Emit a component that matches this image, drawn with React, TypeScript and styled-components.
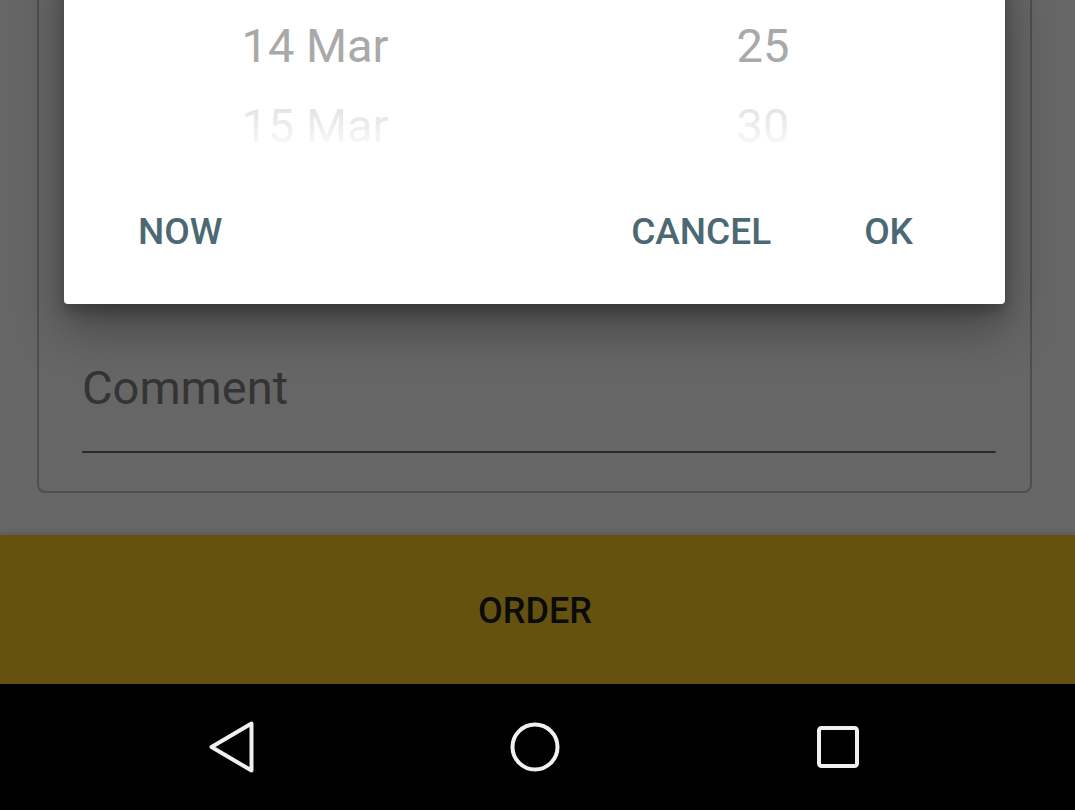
import React from "react";
import styled, { createGlobalStyle } from "styled-components";

const GlobalStyle = createGlobalStyle`
  html, body {
    margin: 0;
    padding: 0;
    background: #000;
  }
  body {
    font-family: Roboto, "Noto Sans", Arial, sans-serif;
  }
  * { box-sizing: border-box; }
`;

const Screen = styled.div`
  width: 1075px;
  height: 810px;
  display: flex;
  flex-direction: column;
  overflow: hidden;
  background: #ffffff;
`;

const AppArea = styled.div`
  position: relative;
  flex: 1;
  display: flex;
  flex-direction: column;
  overflow: hidden;
`;

const Main = styled.main`
  height: 535px;
  display: flex;
  flex-direction: column;
  justify-content: flex-end;
  overflow: hidden;
  background: #ffffff;
`;

const Card = styled.section`
  flex-shrink: 0;
  margin: 0 43px 42px 37px;
  min-height: 700px;
  border: 2px solid #c2c2c2;
  border-radius: 8px;
  padding: 0 34px 38px 43px;
  display: flex;
  flex-direction: column;
  justify-content: flex-end;
`;

const FieldLabel = styled.div`
  font-family: Roboto, sans-serif;
  font-size: 47px;
  line-height: 55px;
  color: #838383;
  margin-bottom: 36px;
`;

const FieldLine = styled.div`
  height: 2px;
  background: #686868;
  border-radius: 1px;
`;

const OrderBar = styled.button`
  flex: 1;
  border: none;
  margin: 0;
  padding: 2px 5px 0 0;
  background: #ffcd26;
  box-shadow: 0 -2px 4px rgba(70, 60, 140, 0.18);
  display: flex;
  align-items: center;
  justify-content: center;
  font-family: Roboto, sans-serif;
  font-weight: 500;
  font-size: 36px;
  color: #1c1c1c;
`;

const Scrim = styled.div`
  position: absolute;
  inset: 0;
  background: rgba(0, 0, 0, 0.6);
`;

const Dialog = styled.div`
  position: absolute;
  left: 64px;
  top: -40px;
  width: 941px;
  background: #ffffff;
  border-radius: 4px;
  box-shadow: 0 24px 48px rgba(0, 0, 0, 0.34), 0 8px 14px rgba(0, 0, 0, 0.22);
  display: flex;
  flex-direction: column;
`;

const Picker = styled.div`
  display: grid;
  grid-template-columns: 448px 448px;
  padding: 46px 0 0 27px;
`;

const Wheel = styled.div`
  display: flex;
  flex-direction: column;
  align-items: center;
`;

const WheelItem = styled.div<{ $fade: number }>`
  height: 80px;
  line-height: 80px;
  font-family: Roboto, sans-serif;
  font-size: 47px;
  color: #a9a9a9;
  white-space: nowrap;
  ${(p) =>
    p.$fade < 1
      ? `-webkit-mask-image: linear-gradient(to bottom, rgba(0,0,0,${p.$fade}) 30%, rgba(0,0,0,${
          p.$fade * 0.35
        }) 70%);
         mask-image: linear-gradient(to bottom, rgba(0,0,0,${p.$fade}) 30%, rgba(0,0,0,${
          p.$fade * 0.35
        }) 70%);`
      : ""}
`;

const Actions = styled.div`
  display: flex;
  align-items: center;
  padding: 30px 92px 36px 74px;
  gap: 93px;
`;

const Spacer = styled.div`
  flex: 1;
`;

const ActionButton = styled.button`
  border: none;
  background: transparent;
  padding: 0;
  margin: 0;
  height: 72px;
  line-height: 72px;
  font-family: Roboto, sans-serif;
  font-weight: 500;
  font-size: 37px;
  color: #4b6874;
`;

const NavBar = styled.nav`
  height: 126px;
  flex-shrink: 0;
  background: #000000;
  display: flex;
  align-items: center;
  justify-content: center;
  gap: 247px;
  padding-right: 6px;
`;

const NavIcon = styled.svg`
  width: 56px;
  height: 56px;
  display: block;
`;

const dates = ["14 Mar", "15 Mar"];
const minutes = ["25", "30"];
const fades = [1, 0.3];

export default function App() {
  return (
    <>
      <GlobalStyle />
      <Screen>
        <AppArea>
          <Main>
            <Card>
              <FieldLabel>Comment</FieldLabel>
              <FieldLine />
            </Card>
          </Main>
          <OrderBar>ORDER</OrderBar>
          <Scrim />
          <Dialog>
            <Picker>
              <Wheel>
                {dates.map((d, i) => (
                  <WheelItem key={d} $fade={fades[i]}>
                    {d}
                  </WheelItem>
                ))}
              </Wheel>
              <Wheel>
                {minutes.map((m, i) => (
                  <WheelItem key={m} $fade={fades[i]}>
                    {m}
                  </WheelItem>
                ))}
              </Wheel>
            </Picker>
            <Actions>
              <ActionButton>NOW</ActionButton>
              <Spacer />
              <ActionButton>CANCEL</ActionButton>
              <ActionButton>OK</ActionButton>
            </Actions>
          </Dialog>
        </AppArea>
        <NavBar>
          <NavIcon viewBox="0 0 56 56">
            <path
              d="M47.5 4.5 L47.5 51.5 L7.5 28 Z"
              fill="none"
              stroke="#f0f0f0"
              strokeWidth="4"
              strokeLinejoin="round"
            />
          </NavIcon>
          <NavIcon viewBox="0 0 56 56">
            <circle cx="28" cy="28" r="22.5" fill="none" stroke="#f0f0f0" strokeWidth="4" />
          </NavIcon>
          <NavIcon viewBox="0 0 56 56">
            <rect
              x="9"
              y="9"
              width="38"
              height="38"
              rx="2.5"
              fill="none"
              stroke="#f0f0f0"
              strokeWidth="4"
            />
          </NavIcon>
        </NavBar>
      </Screen>
    </>
  );
}
